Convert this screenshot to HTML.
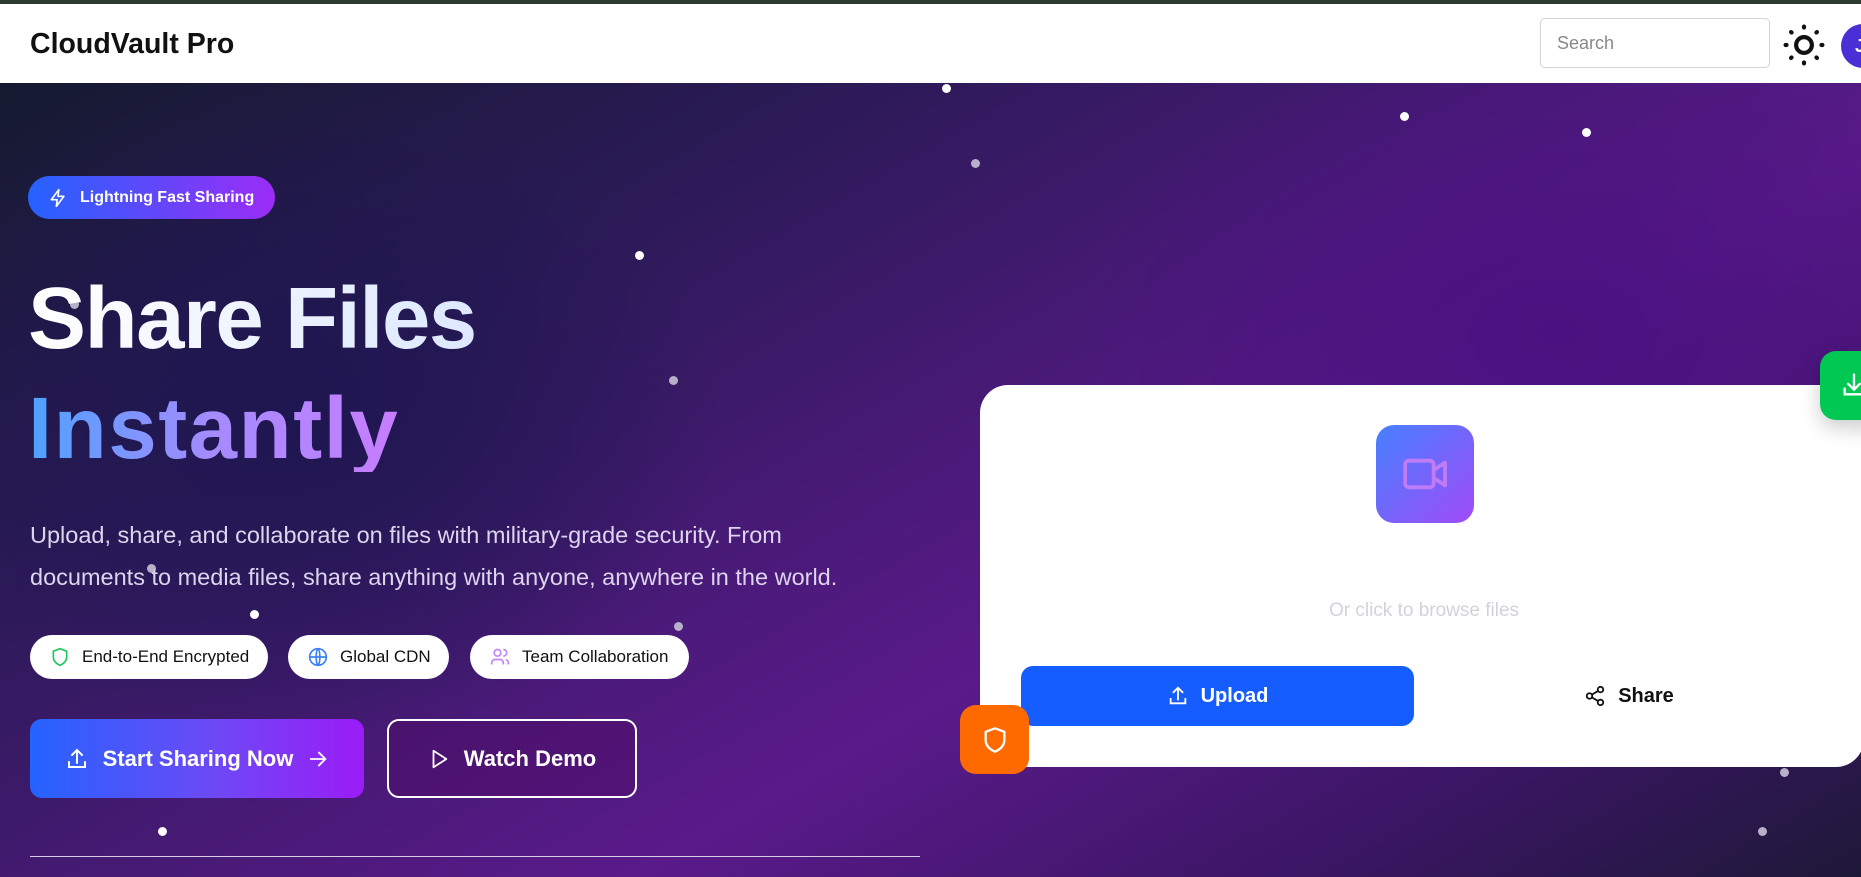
<!DOCTYPE html>
<html><head><meta charset="utf-8"><style>
*{margin:0;padding:0;box-sizing:border-box}
html,body{width:1861px;height:877px;overflow:hidden;font-family:"Liberation Sans",sans-serif}
body{position:relative;background:#fff}
.top{position:absolute;left:0;top:0;width:1861px;height:4px;background:#2d3a2d}
header{position:absolute;left:0;top:4px;width:1861px;height:79px;background:#fff}
.logo{position:absolute;left:30px;top:24px;font-size:28.5px;font-weight:bold;color:#111}
.search{position:absolute;left:1540px;top:14px;width:230px;height:50px;border:1px solid #d4d4d4;border-radius:5px;font-size:18px;color:#888;padding:14px 16px}
.sun{position:absolute;left:1783px;top:20px}
.av{position:absolute;left:1841px;top:20px;width:44px;height:44px;border-radius:50%;background:#4a2fd6;color:#fff;font-weight:bold;font-size:18px;padding:12px 0 0 14px}
.hero{position:absolute;left:0;top:83px;width:1861px;height:794px;overflow:hidden;
background:radial-gradient(ellipse 420px 330px at 300px 330px,#1e1650 0%,rgba(30,22,80,0) 100%),radial-gradient(ellipse 500px 300px at 1560px 250px,#4a1180 0%,rgba(74,17,128,0) 100%),linear-gradient(150deg,#151a30 0%,#2a1a55 25%,#4b1a7a 50%,#5a1a8a 62%,#3c1666 82%,#1e1838 100%)}
.dot{position:absolute;width:9px;height:9px;border-radius:50%;background:#fff}
.dot.g{background:#b8b0c8}
.badge{position:absolute;left:28px;top:93px;width:247px;height:43px;border-radius:22px;background:linear-gradient(90deg,#2563ff,#9b2cf5);color:#fff;font-weight:bold;font-size:16px;display:flex;align-items:center;padding-left:20px;gap:12px}
h1{position:absolute;left:28px;font-size:87px;font-weight:bold;line-height:1;letter-spacing:-1.5px}
.h1a{top:192px;background:linear-gradient(90deg,#fff,#dde8ff);-webkit-background-clip:text;background-clip:text;color:transparent}
.h1b{top:302px;letter-spacing:1.5px;background:linear-gradient(90deg,#4ea1ff,#a58bff 50%,#c77dff);-webkit-background-clip:text;background-clip:text;color:transparent}
.para{position:absolute;left:30px;top:431px;width:860px;font-size:23.5px;line-height:42px;color:#ddd4ee}
.chip{position:absolute;top:552px;height:44px;border-radius:22px;background:#fff;color:#111;font-size:17px;display:flex;align-items:center;gap:12px;padding-left:20px}
.btn{position:absolute;top:636px;height:79px;border-radius:12px;color:#fff;font-weight:bold;font-size:22px;display:flex;align-items:center;justify-content:center;gap:14px}
.b1{left:30px;width:334px;background:linear-gradient(90deg,#2563ff,#6d49f5 55%,#9b1cf7)}
.b2{left:387px;width:250px;border:2px solid #fff;background:rgba(80,10,100,.4)}
.line{position:absolute;left:30px;top:773px;width:890px;height:1px;background:#d9cde6}
.card{position:absolute;left:980px;top:302px;width:884px;height:382px;background:#fff;border-radius:28px}
.vid{position:absolute;left:396px;top:40px;width:98px;height:98px;border-radius:18px;background:linear-gradient(135deg,#4680ff,#a14bf7)}
.or{position:absolute;left:0;width:888px;top:215px;text-align:center;font-size:19px;color:#d2d2dc}
.up{position:absolute;left:41px;top:281px;width:393px;height:60px;border-radius:12px;background:#165dff;color:#fff;font-weight:bold;font-size:20px;display:flex;align-items:center;justify-content:center;gap:12px}
.sh{position:absolute;left:434px;top:281px;width:430px;height:60px;color:#111;font-weight:bold;font-size:20px;display:flex;align-items:center;justify-content:center;gap:12px}
.or2{position:absolute;left:960px;top:622px;width:69px;height:69px;border-radius:16px;background:#ff6a00;display:flex;align-items:center;justify-content:center}
.gr{position:absolute;left:1820px;top:268px;width:70px;height:69px;border-radius:16px;background:#00c853;box-shadow:0 8px 20px rgba(0,0,0,.2)}
</style></head><body>
<div class="top"></div>
<header>
<div class="logo">CloudVault Pro</div>
<div class="search">Search</div>
<svg class="sun" width="42" height="42" viewBox="0 0 24 24" fill="none" stroke="#111" stroke-width="2.4" stroke-linecap="round"><circle cx="12" cy="12" r="4.5"/><path d="M12 1.5v.5M12 22v.5M1.5 12h.5M22 12h.5M4.6 4.6l.3.3M19.1 19.1l.3.3M4.6 19.4l.3-.3M19.1 4.9l.3-.3"/></svg>
<div class="av">J</div>
</header>
<div class="hero">
<div class="dot" style="left:942px;top:1px"></div>
<div class="dot" style="left:1400px;top:29px"></div>
<div class="dot" style="left:1582px;top:45px"></div>
<div class="dot g" style="left:971px;top:76px"></div>
<div class="dot" style="left:635px;top:168px"></div>
<div class="dot g" style="left:70px;top:217px"></div>
<div class="dot g" style="left:669px;top:293px"></div>
<div class="dot g" style="left:147px;top:481px"></div>
<div class="dot" style="left:250px;top:527px"></div>
<div class="dot g" style="left:674px;top:539px"></div>
<div class="dot g" style="left:1780px;top:685px"></div>
<div class="dot g" style="left:1758px;top:744px"></div>
<div class="dot" style="left:158px;top:744px"></div>
<div class="badge"><svg width="20" height="20" viewBox="0 0 24 24" fill="none" stroke="#fff" stroke-width="2" stroke-linejoin="round"><path d="M13 2L4 14h7l-1 8 9-12h-7l1-8z"/></svg>Lightning Fast Sharing</div>
<h1 class="h1a">Share Files</h1>
<h1 class="h1b">Instantly</h1>
<div class="para">Upload, share, and collaborate on files with military-grade security. From documents to media files, share anything with anyone, anywhere in the world.</div>
<div class="chip" style="left:30px;width:238px"><svg width="20" height="20" viewBox="0 0 24 24" fill="none" stroke="#22c55e" stroke-width="2"><path d="M12 2l8 3v7c0 5-3.5 8-8 10-4.5-2-8-5-8-10V5z"/></svg>End-to-End Encrypted</div>
<div class="chip" style="left:288px;width:161px"><svg width="20" height="20" viewBox="0 0 24 24" fill="none" stroke="#3b82f6" stroke-width="2"><circle cx="12" cy="12" r="10"/><path d="M2 12h20M12 2c3 3 3 17 0 20M12 2c-3 3-3 17 0 20"/></svg>Global CDN</div>
<div class="chip" style="left:470px;width:219px"><svg width="20" height="20" viewBox="0 0 24 24" fill="none" stroke="#c084fc" stroke-width="2"><circle cx="9" cy="7" r="4"/><path d="M2 21v-2a4 4 0 014-4h6a4 4 0 014 4v2M16 3a4 4 0 010 8M22 21v-2a4 4 0 00-3-4"/></svg>Team Collaboration</div>
<div class="btn b1"><svg width="24" height="24" viewBox="0 0 24 24" fill="none" stroke="#fff" stroke-width="2" stroke-linecap="round"><path d="M4 15v5h16v-5M12 3v13M7 8l5-5 5 5"/></svg>Start Sharing Now <svg width="22" height="22" viewBox="0 0 24 24" fill="none" stroke="#fff" stroke-width="2" stroke-linecap="round"><path d="M4 12h16M13 5l7 7-7 7"/></svg></div>
<div class="btn b2"><svg width="22" height="24" viewBox="0 0 24 24" fill="none" stroke="#fff" stroke-width="2" stroke-linejoin="round"><path d="M6 3l14 9-14 9z"/></svg>Watch Demo</div>
<div class="line"></div>
<div class="card">
<div class="vid"><svg style="position:absolute;left:27px;top:30px" width="46" height="38" viewBox="0 0 24 20" fill="none" stroke="#c07cf5" stroke-width="2" stroke-linejoin="round"><rect x="1" y="3" width="15" height="14" rx="2"/><path d="M16 8l6-4v12l-6-4"/></svg></div>
<div class="or">Or click to browse files</div>
<div class="up"><svg width="22" height="22" viewBox="0 0 24 24" fill="none" stroke="#fff" stroke-width="2" stroke-linecap="round"><path d="M4 15v5h16v-5M12 3v13M7 8l5-5 5 5"/></svg>Upload</div>
<div class="sh"><svg width="22" height="22" viewBox="0 0 24 24" fill="none" stroke="#111" stroke-width="2"><circle cx="18" cy="5" r="3"/><circle cx="6" cy="12" r="3"/><circle cx="18" cy="19" r="3"/><path d="M8.6 13.5l6.8 4M15.4 6.5l-6.8 4"/></svg>Share</div>
</div>
<div class="or2"><svg width="28" height="30" viewBox="0 0 24 24" fill="none" stroke="#fff" stroke-width="2"><path d="M12 2l8 3v7c0 5-3.5 8-8 10-4.5-2-8-5-8-10V5z"/></svg></div>
<div class="gr"><svg style="position:absolute;left:20px;top:20px" width="28" height="28" viewBox="0 0 24 24" fill="none" stroke="#fff" stroke-width="2" stroke-linecap="round"><path d="M4 15v5h16v-5M12 3v13M7 11l5 5 5-5"/></svg></div>
</div>
</body></html>
